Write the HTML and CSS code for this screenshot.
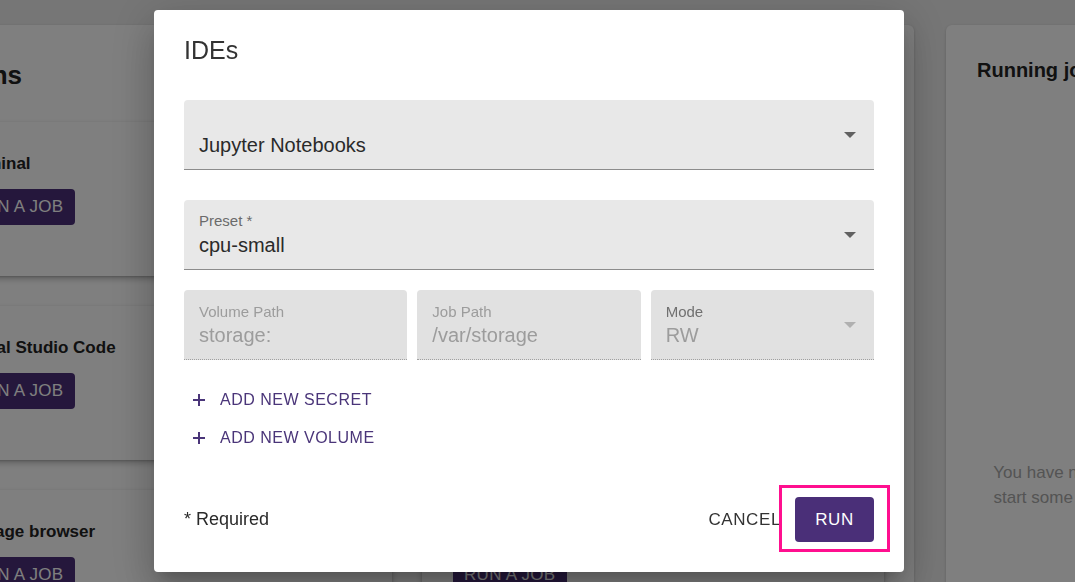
FILE: index.html
```html
<!DOCTYPE html>
<html lang="en">
<head>
<meta charset="utf-8">
<title>IDEs</title>
<link rel="stylesheet" href="styles.css">
</head>
<body>
<div class="page">
  <section class="apps">
    <h2 class="apps-title">Applications</h2>
    <div class="app-grid">
      <div class="app-card"><h3 class="app-name">Terminal</h3><button class="job-btn">RUN A JOB</button></div>
      <div class="app-card"><h3 class="app-name">Jupyter Notebooks</h3><button class="job-btn">RUN A JOB</button></div>
      <div class="app-card"><h3 class="app-name">Visual Studio Code</h3><button class="job-btn">RUN A JOB</button></div>
      <div class="app-card"><h3 class="app-name">RStudio</h3><button class="job-btn">RUN A JOB</button></div>
      <div class="app-card"><h3 class="app-name">Storage browser</h3><button class="job-btn">RUN A JOB</button></div>
      <div class="app-card"><h3 class="app-name">Shell</h3><button class="job-btn">RUN A JOB</button></div>
    </div>
  </section>
  <section class="running">
    <h2 class="running-title">Running jobs</h2>
    <p class="running-empty">You have no running jobs yet.<br>start some applications below</p>
  </section>
</div>

<div class="backdrop">
  <div class="dialog">
    <h1 class="dialog-title">IDEs</h1>
    <div class="form">
      <div class="field">
        <div class="field-label"></div>
        <div class="field-value">Jupyter Notebooks</div>
        <span class="arrow"></span>
      </div>
      <div class="field">
        <div class="field-label">Preset *</div>
        <div class="field-value">cpu-small</div>
        <span class="arrow"></span>
      </div>
      <div class="field-row">
        <div class="field disabled">
          <div class="field-label">Volume Path</div>
          <div class="field-value">storage:</div>
        </div>
        <div class="field disabled">
          <div class="field-label">Job Path</div>
          <div class="field-value">/var/storage</div>
        </div>
        <div class="field disabled select">
          <div class="field-label">Mode</div>
          <div class="field-value">RW</div>
          <span class="arrow"></span>
        </div>
      </div>
      <div class="add-list">
        <button class="add-btn"><svg class="plus" viewBox="0 0 14 14" width="14" height="14"><path d="M7 1v12M1 7h12" stroke="currentColor" stroke-width="2" fill="none"/></svg>ADD NEW SECRET</button>
        <button class="add-btn"><svg class="plus" viewBox="0 0 14 14" width="14" height="14"><path d="M7 1v12M1 7h12" stroke="currentColor" stroke-width="2" fill="none"/></svg>ADD NEW VOLUME</button>
      </div>
    </div>
    <div class="footer">
      <span class="required">* Required</span>
      <div class="actions">
        <button class="cancel-btn">CANCEL</button>
        <div class="run-wrap">
          <button class="run-btn">RUN</button>
          <span class="highlight"></span>
        </div>
      </div>
    </div>
  </div>
</div>
</body>
</html>
```

FILE: styles.css
```css
* { box-sizing: border-box; }

html, body {
  margin: 0;
  height: 100%;
  overflow: hidden;
}

body {
  font-family: "Liberation Sans", Arial, sans-serif;
  background: #ececec;
  color: #222;
}

button {
  font-family: inherit;
  border: 0;
  background: none;
  cursor: pointer;
  padding: 0;
}

/* ---------- background page ---------- */
.page {
  display: flex;
  align-items: flex-start;
  gap: 32px;
  padding-top: 25px;
  margin-left: -100px;
  width: 1600px;
}

.apps {
  width: 1014px;
  flex: none;
  background: #fff;
  border-radius: 6px;
  box-shadow: 0 1px 3px rgba(0,0,0,0.2);
  padding: 30px 30px 40px 30px;
}

.apps-title {
  margin: 0 0 27px -64px;
  font-size: 26px;
  line-height: 40px;
  font-weight: bold;
}

.app-grid {
  display: grid;
  grid-template-columns: 1fr 1fr;
  gap: 30px;
}

.app-card {
  height: 154px;
  background: #fff;
  border-radius: 4px;
  box-shadow: 0 3px 6px rgba(0,0,0,0.25), 0 1px 2px rgba(0,0,0,0.15);
  padding: 31px 30px 0 31px;
}

.app-name {
  margin: 0 0 14px;
  font-size: 17px;
  line-height: 22px;
  font-weight: bold;
}

.job-btn {
  height: 36px;
  padding: 0 11px;
  background: #4a2f78;
  color: #fff;
  border-radius: 4px;
  font-size: 17px;
  letter-spacing: 0.3px;
}

.running {
  width: 318px;
  height: 620px;
  flex: none;
  background: #fff;
  border-radius: 6px;
  box-shadow: 0 1px 3px rgba(0,0,0,0.2);
  padding: 33px 31px;
}

.running-title {
  margin: 0;
  font-size: 20px;
  line-height: 24px;
  font-weight: bold;
}

.running-empty {
  margin: 378px -20px 0;
  text-align: center;
  font-size: 17px;
  line-height: 25px;
  color: #a8a8a8;
  white-space: nowrap;
}

/* ---------- dialog ---------- */
.backdrop {
  position: fixed;
  inset: 0;
  background: rgba(0,0,0,0.5);
  display: flex;
  align-items: center;
  justify-content: center;
  padding-right: 17px;
}

.dialog {
  width: 750px;
  height: 562px;
  background: #fff;
  border-radius: 4px;
  box-shadow: 0 11px 15px -7px rgba(0,0,0,0.2), 0 24px 38px 3px rgba(0,0,0,0.14), 0 9px 46px 8px rgba(0,0,0,0.12);
  padding: 26px 30px 30px;
  display: flex;
  flex-direction: column;
}

.dialog-title {
  margin: 0 0 36px;
  font-size: 25px;
  line-height: 28px;
  font-weight: normal;
  color: #333;
}

.form {
  display: flex;
  flex-direction: column;
}

.field {
  position: relative;
  height: 70px;
  background: #e8e8e8;
  border-radius: 4px 4px 0 0;
  border-bottom: 1px solid #8c8c8c;
  padding: 12px 15px 0;
  margin-bottom: 30px;
}

.field-label {
  height: 18px;
  font-size: 15px;
  line-height: 18px;
  color: #6b6b6b;
  margin-bottom: 3px;
}

.field-value {
  font-size: 20px;
  line-height: 24px;
  color: #2a2a2a;
}

.arrow {
  position: absolute;
  right: 18px;
  top: 32px;
  width: 0;
  height: 0;
  border-left: 6px solid transparent;
  border-right: 6px solid transparent;
  border-top: 6px solid #616161;
}

.field-row {
  display: flex;
  gap: 10px;
  margin-top: -10px;
}

.field-row .field {
  flex: 1;
  margin-bottom: 0;
  padding-top: 13px;
}

.field-row .field-label {
  margin-bottom: 2px;
}

.field.disabled {
  background: #e1e1e1;
  border-bottom: 1px dotted #a0a0a0;
}

.field.disabled .field-label { color: #9c9c9c; }
.field.disabled .field-value { color: #9c9c9c; }
.field.disabled.select .field-label { color: #707070; }
.field.disabled .arrow { border-top-color: #b0b0b0; }

.add-list {
  display: flex;
  flex-direction: column;
  align-items: flex-start;
  gap: 2px;
  margin-top: 22px;
}

.add-btn {
  height: 36px;
  display: flex;
  align-items: center;
  gap: 14px;
  padding: 0 8px;
  color: #4a3579;
  font-size: 16px;
  letter-spacing: 0.5px;
}

.plus { flex: none; }

.footer {
  margin-top: auto;
  display: flex;
  align-items: center;
  justify-content: space-between;
}

.required {
  font-size: 18px;
  color: #2a2a2a;
}

.actions {
  display: flex;
  align-items: center;
  gap: 14px;
}

.cancel-btn {
  font-size: 17px;
  letter-spacing: 0.6px;
  color: #333;
  height: 45px;
}

.run-wrap {
  position: relative;
}

.run-btn {
  width: 79px;
  height: 45px;
  background: #4a2f78;
  color: #fff;
  border-radius: 4px;
  font-size: 17px;
  letter-spacing: 0.5px;
  display: block;
}

.highlight {
  position: absolute;
  top: -12px;
  bottom: -10px;
  left: -16px;
  right: -16px;
  border: 3px solid #ff0f8f;
  pointer-events: none;
}
```
